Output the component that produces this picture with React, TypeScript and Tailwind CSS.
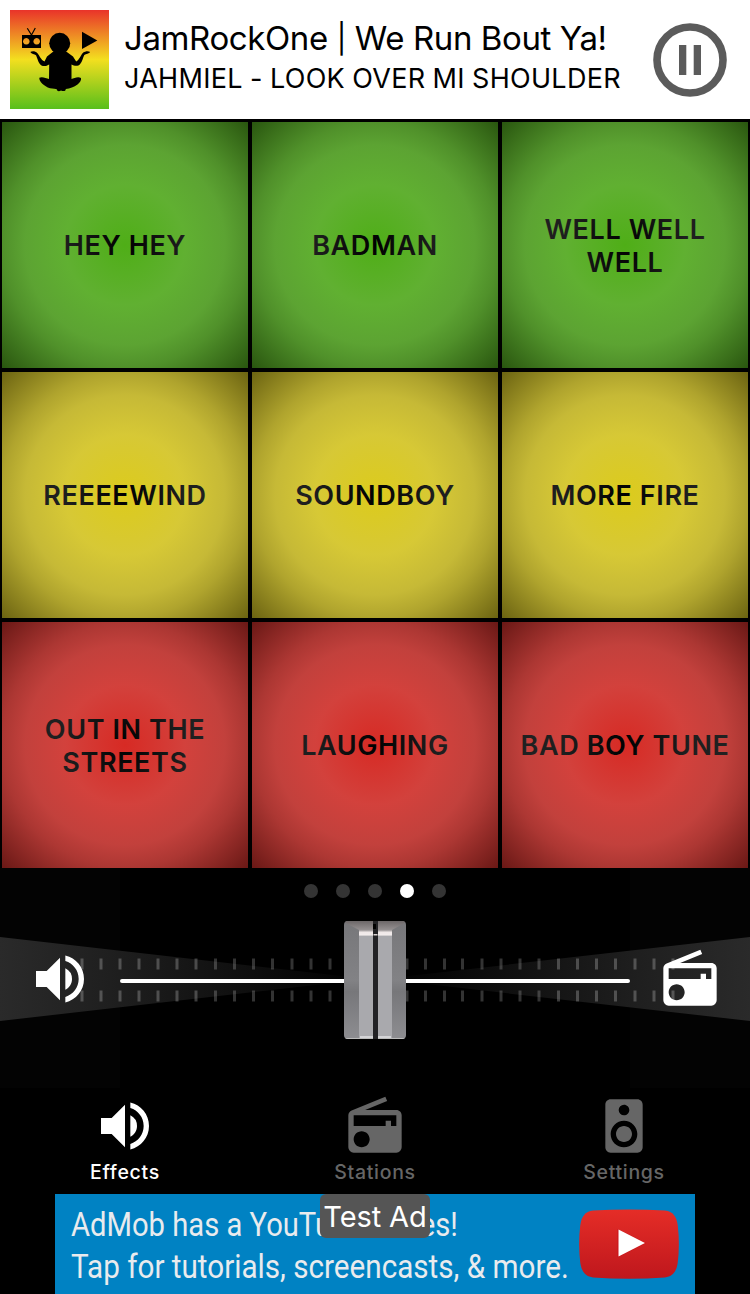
import React from "react";
import { MdRadio, MdSpeaker, MdVolumeUp } from "react-icons/md";

const rows: { color: string; pads: string[][] }[] = [
  {
    color: "bg-[#4fae17]",
    pads: [["HEY HEY"], ["BADMAN"], ["WELL WELL", "WELL"]],
  },
  {
    color: "bg-[#dccb1c]",
    pads: [["REEEEWIND"], ["SOUNDBOY"], ["MORE FIRE"]],
  },
  {
    color: "bg-[#d72a24]",
    pads: [["OUT IN THE", "STREETS"], ["LAUGHING"], ["BAD BOY TUNE"]],
  },
];

const leftTicks = [82, 101, 120, 139, 158, 177, 196, 215.5, 234.5, 253.5, 272.5, 292, 311, 330];
const rightTicks = [407, 425.5, 444.5, 462.5, 482, 501, 520, 539, 558.5, 577.5, 596.5, 615.5, 635, 654, 673];

function Logo() {
  return (
    <svg viewBox="0 0 99 99" className="h-[99px] w-[99px] shrink-0">
      <defs>
        <linearGradient id="rasta" x1="0" y1="0" x2="0" y2="1">
          <stop offset="0" stopColor="#e9332a" />
          <stop offset="0.5" stopColor="#f3df1f" />
          <stop offset="1" stopColor="#58bf1b" />
        </linearGradient>
      </defs>
      <rect width="99" height="99" fill="url(#rasta)" />
      <path d="M17.3 18.3 L21.5 25 M25.3 18 L21.5 25" stroke="#000" strokeWidth="1.2" />
      <path fillRule="evenodd" d="M12 25h19v13H12zM16.3 28a3.3 3.3 0 1 0 .01 0zM26.7 28a3.3 3.3 0 1 0 .01 0z" />
      <path d="M72 21.8v17.2l15.3-8.6z" />
      <circle cx="49.7" cy="33.3" r="10.5" />
      <path d="M44 41 L37 46.5 L34.5 51.5 C31 50 29.5 45.5 27.5 43.2 C25 40.7 22 41 20.3 42 C21.5 44 24.5 44.3 26 45.2 C27.5 48 28 53 31.5 55.5 C34 56.8 37 55.8 39.2 54.5 L39 69 C36 68.3 32 66 29.3 67.8 C29 71.5 34 76.5 40 78.3 C43 79 46 78.5 47 79.5 C46.8 81.5 49.5 81.5 51 80.5 C53 81.5 55.7 81.5 55.8 79 C60 78.3 64 77.5 67.5 74.5 C69.8 72.5 71.5 70.5 71 68 C68 66 64 68.3 61.5 69 L61.5 54.5 C64 55.8 68 56.6 70 54.3 C72.5 51.5 73 47.5 74.3 45 C76 44 79 43.8 80.3 42 C78 40.8 75.5 41 73 42.8 C70.5 45.5 69.5 49.7 66.2 51.5 L63 46.5 L55.5 41 Z" />
    </svg>
  );
}

function Header() {
  return (
    <header className="flex h-[119px] items-center bg-white pl-[10px] pr-[23px] text-black">
      <Logo />
      <div className="-mt-1 ml-[15px] min-w-0 flex-1 whitespace-nowrap">
        <h1 className="pt-px text-[33px] leading-[41px] tracking-[-0.4px]">
          JamRockOne <span className="relative -top-px text-[29px]">|</span> We Run Bout Ya!
        </h1>
        <p className="text-[27px] leading-[38px] tracking-[0.3px] [word-spacing:-0.7px]">JAHMIEL - LOOK OVER MI SHOULDER</p>
      </div>
      <button aria-label="Pause" className="h-[74px] w-[74px] shrink-0">
        <svg viewBox="0 0 74 74" className="block h-[74px] w-[74px]">
          <circle cx="37" cy="37" r="33" fill="none" stroke="#5b5b5b" strokeWidth="7.6" />
          <path d="M26 22h7.3v30H26zM40.7 22H48v30h-7.3z" fill="#5b5b5b" />
        </svg>
      </button>
    </header>
  );
}

function Pads() {
  return (
    <main className="flex flex-col gap-1 px-[2px] pt-[3px]">
      {rows.map((row) => (
        <div key={row.color} className="grid grid-cols-3 gap-1">
          {row.pads.map((lines) => (
            <button
              key={lines[0]}
              className={`relative flex h-[246px] flex-col items-center justify-center whitespace-nowrap pt-[1.5px] text-[27px] font-[560] leading-[33px] tracking-[0.6px] text-black ${row.color}`}
            >
              {lines.map((line) => (
                <span key={line}>{line}</span>
              ))}
              <span className="absolute inset-0 bg-[radial-gradient(circle_174px_at_center,rgba(200,200,200,0)_0px,rgba(187,187,187,0.16)_60px,rgba(132,132,132,0.25)_100px,rgba(82,82,82,0.32)_123px,rgba(8,8,8,0.53)_174px)]" />
            </button>
          ))}
        </div>
      ))}
    </main>
  );
}

function FaderArt() {
  return (
    <svg viewBox="0 868 750 220" className="absolute inset-0 h-[220px] w-[750px]">
      <defs>
        <linearGradient id="wedgeL">
          <stop offset="0" stopColor="#2a2a2a" />
          <stop offset="0.3" stopColor="#1f1f1f" />
          <stop offset="1" stopColor="#000" />
        </linearGradient>
        <linearGradient id="wedgeR">
          <stop offset="0" stopColor="#000" />
          <stop offset="0.7" stopColor="#1f1f1f" />
          <stop offset="1" stopColor="#2a2a2a" />
        </linearGradient>
      </defs>
      <path d="M0 868h120v220H0zM630 868h120v220H630z" fill="#030303" />
      <path d="M0 937L368 979L0 1021z" fill="url(#wedgeL)" />
      <path d="M750 937L382 979L750 1021z" fill="url(#wedgeR)" />
      {[...leftTicks, ...rightTicks].map((x) => (
        <path
          key={x}
          d={`M${x - 1.5} 958.5h3v11h-3zM${x - 1.5} 990.5h3v11h-3z`}
          fill="#fff"
          fillOpacity={x < 200 || x > 550 ? 0.23 : 0.2}
        />
      ))}
    </svg>
  );
}

function Knob() {
  return (
    <svg viewBox="0 0 62 118" className="h-[118px] w-[62px]">
      <defs>
        <clipPath id="knobClip">
          <rect width="62" height="118" rx="4" />
        </clipPath>
        <linearGradient id="side" x1="0" y1="0" x2="0" y2="1">
          <stop offset="0" stopColor="#77777a" />
          <stop offset="0.5" stopColor="#828285" />
          <stop offset="0.6" stopColor="#77777a" />
          <stop offset="1" stopColor="#8d8d91" />
        </linearGradient>
        <linearGradient id="bevel" x1="0" y1="0" x2="0" y2="1">
          <stop offset="0" stopColor="#6c6768" />
          <stop offset="0.6" stopColor="#969192" />
          <stop offset="0.75" stopColor="#efe8e8" />
          <stop offset="0.9" stopColor="#f2ecec" />
          <stop offset="1" stopColor="#c6c3c5" />
        </linearGradient>
      </defs>
      <g clipPath="url(#knobClip)">
        <rect width="62" height="118" fill="url(#side)" />
        <path d="M15 10H48V118H15z" fill="#a9a9ad" />
        <path d="M0 0H62V1L48 9V15H15V9L0 1z" fill="url(#bevel)" />
        <path d="M16 115h31v3H16z" fill="#d3d3d6" />
        <path d="M0 117h62v1H0z" fill="#bbb" />
        <path d="M29 0h5v118h-5z" fill="#222225" />
        <path d="M29 3h3v5h-3z" fill="#000" />
        <path d="M29.5 13h4v1.5h-4z" fill="#d8d2d2" />
      </g>
    </svg>
  );
}

function Fader() {
  return (
    <section className="relative h-[220px]">
      <FaderArt />
      <div className="relative flex h-[46px] items-center justify-center gap-[18px]">
        {[0, 1, 2, 3, 4].map((i) => (
          <span key={i} className={`h-[14px] w-[14px] rounded-full ${i === 3 ? "bg-white" : "bg-[#343434]"}`} />
        ))}
      </div>
      <div className="relative mt-[7px] flex h-[118px] items-center text-white">
        <div className="flex w-[120px] justify-center">
          <MdVolumeUp size={64} className="-mt-[2px]" />
        </div>
        <div className="flex flex-1 items-center">
          <span className="mt-[2px] h-1 flex-1 rounded-l-full bg-white" />
          <Knob />
          <span className="mt-[2px] h-1 flex-1 rounded-r-full bg-white" />
        </div>
        <div className="flex w-[120px] justify-center">
          <MdRadio size={64} className="-mt-[2px]" />
        </div>
      </div>
    </section>
  );
}

function Tabs() {
  return (
    <nav className="grid h-[106px] grid-cols-3 pt-[6px] text-[19.5px] font-medium leading-[28px] tracking-[0.7px]">
      <a className="flex flex-col items-center text-white">
        <MdVolumeUp size={64} />
        <span>Effects</span>
      </a>
      <a className="flex flex-col items-center text-[#666]">
        <MdRadio size={64} />
        <span>Stations</span>
      </a>
      <a className="flex flex-col items-center pr-[2px] text-[#666]">
        <MdSpeaker size={64} />
        <span>Settings</span>
      </a>
    </nav>
  );
}

function AdBanner() {
  return (
    <aside className="relative mx-auto flex h-[100px] w-[640px] bg-[#0082c3] pl-4 pr-4">
      <div className="w-[508px] whitespace-nowrap pt-[9px] font-[Roboto,sans-serif] text-[34px] leading-[42px] text-[#e9ebee]">
        <p className="w-max origin-left scale-x-[0.858]">AdMob has a YouTube Series!</p>
        <p className="w-max origin-left scale-x-[0.872]">Tap for tutorials, screencasts, &amp; more.</p>
      </div>
      <svg viewBox="0 0 100 70" className="mt-[15px] h-[70px] w-[100px] shrink-0">
        <defs>
          <linearGradient id="tube" x1="0" y1="0" x2="0" y2="1">
            <stop offset="0" stopColor="#e52d27" />
            <stop offset="1" stopColor="#bf171d" />
          </linearGradient>
        </defs>
        <path
          d="M14 1.6Q50 -.8 86 1.6C94 2.2 97.5 8 98.7 16Q101 35 98.7 54C97.5 62 94 67.6 86 68.4Q50 71 14 68.4C6 67.6 2.5 62 1.3 54Q-1 35 1.3 16C2.5 8 6 2.2 14 1.6Z"
          fill="url(#tube)"
        />
        <path d="M38.5 20L67 34L38.5 48.5z" fill="#c9131a" />
        <path d="M39.5 20.5L66 34L39.5 47.5z" fill="#fff" />
      </svg>
      <span className="absolute left-[265px] top-0 flex h-11 w-[110px] items-center justify-center whitespace-nowrap rounded-[6px] bg-[#555] pt-[2px] text-[29px] tracking-[-0.1px] text-white">
        Test Ad
      </span>
    </aside>
  );
}

export default function App() {
  return (
    <div className="flex h-[1294px] w-[750px] flex-col overflow-hidden bg-black font-[Inter,sans-serif]">
      <Header />
      <Pads />
      <Fader />
      <Tabs />
      <AdBanner />
    </div>
  );
}
